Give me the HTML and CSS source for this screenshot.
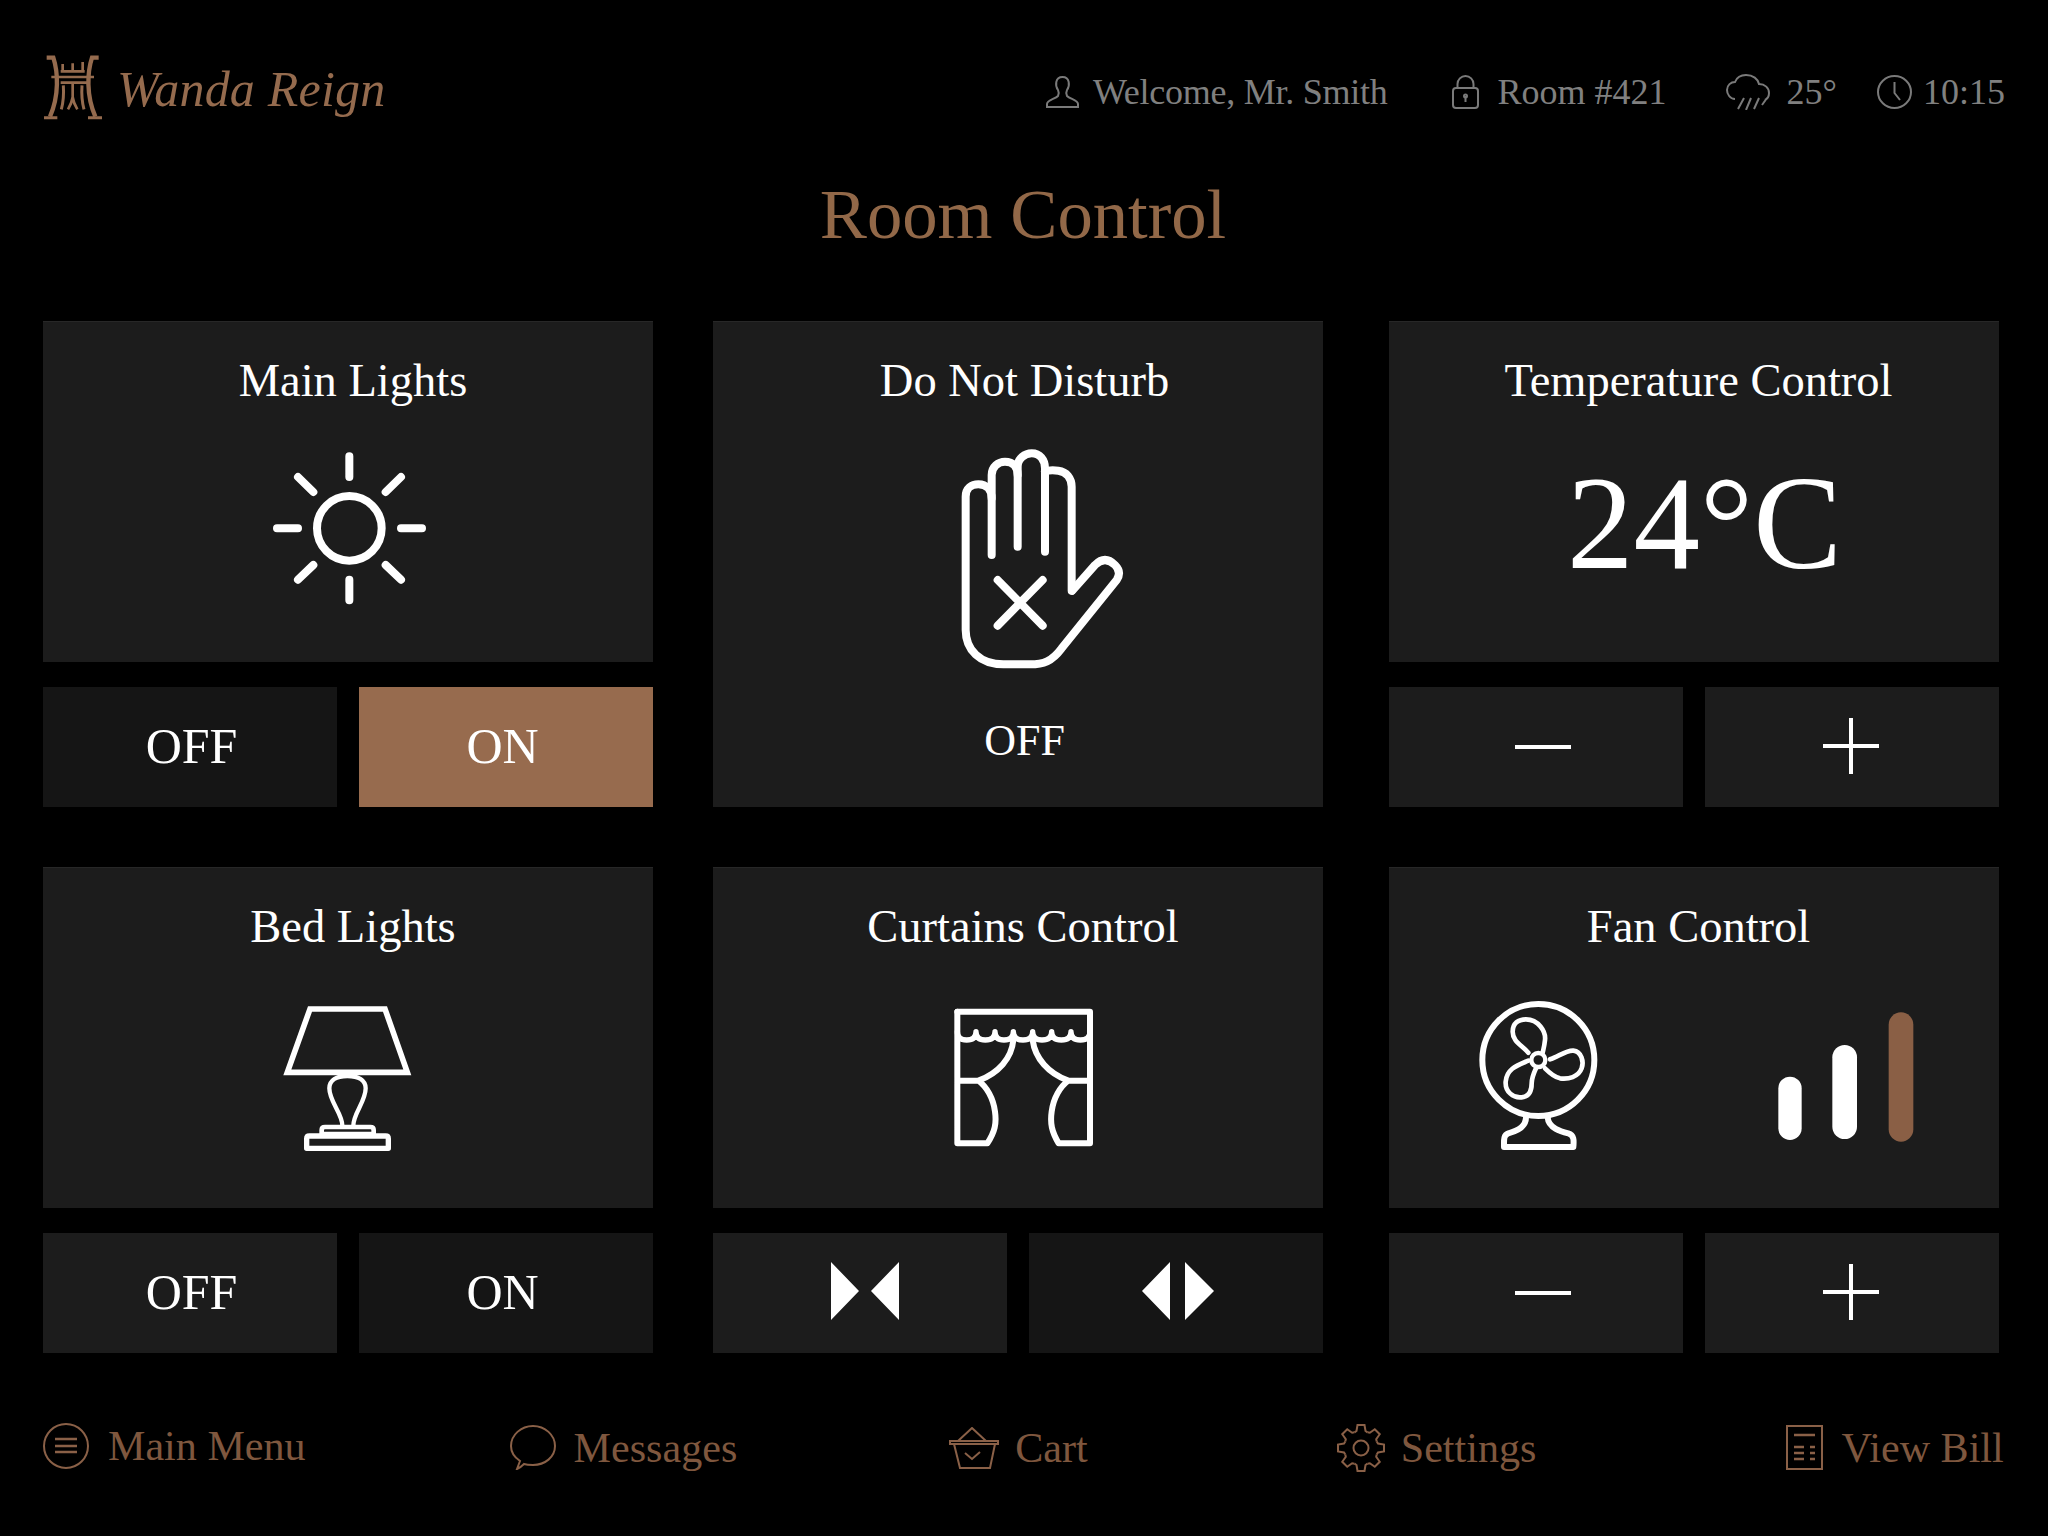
FILE: index.html
```html
<!DOCTYPE html>
<html lang="en">
<head>
<meta charset="utf-8">
<title>Room Control</title>
<link rel="stylesheet" href="styles.css">
</head>
<body>
<div class="page">
  <header class="header">
    <div class="brand">
      <svg class="logo" width="70" height="72" viewBox="0 0 210 216">
        <g class="logo-lines">
          <path stroke-width="13" d="M20 17H40C54 60 58 130 30 194"/>
          <path stroke-width="13" d="M176 17H156C142 60 138 130 166 194"/>
          <path stroke-width="9" d="M12 197H52M144 197H186"/>
          <path stroke-width="8" d="M62 58H134M34 75H162M62 92H150"/>
          <path stroke-width="8" d="M68 36V58M98 34V58M128 30V58"/>
          <path stroke-width="9" d="M70 100C72 130 70 150 64 172M126 100C124 130 126 150 132 172"/>
          <path stroke-width="8" d="M98 96V135C96 150 90 162 84 172M98 135C100 150 106 162 112 172"/>
        </g>
      </svg>
      <span class="brand-name">Wanda Reign</span>
    </div>
    <div class="status">
      <div class="status-item status-welcome">
        <svg class="status-icon" width="33" height="32" viewBox="0 0 33 32"><path d="M1 31H32V28C32 24 24 23 21 20C20 18 20 16 21 14C24 10 24 1 16.5 1C9 1 9 10 12 14C13 16 13 18 12 20C9 23 1 24 1 28Z"/></svg>
        <span>Welcome, Mr. Smith</span>
      </div>
      <div class="status-item status-room">
        <svg class="status-icon" width="27" height="34" viewBox="0 0 27 34"><rect x="1" y="13" width="25" height="20" rx="3"/><path d="M5.5 13V9A8 8 0 0 1 21.5 9V13M13.5 21V27"/><circle cx="13.5" cy="21" r="1.5"/></svg>
        <span>Room #421</span>
      </div>
      <div class="status-item status-weather">
        <svg class="status-icon" width="44" height="36" viewBox="0 0 44 36"><path d="M9 25C4 25 1 20 1 16C1 11 5 8 9 8C11 3 15 1 20 1C27 1 32 5 33 10C39 10 43 14 43 19C43 22 41 25 39 26M18 24L12 35M25 24L20 36M33 24L28 35M41 24L36 31"/></svg>
        <span>25°</span>
      </div>
      <div class="status-item status-clock">
        <svg class="status-icon" width="35" height="34" viewBox="0 0 35 34"><ellipse cx="17.5" cy="17" rx="16.5" ry="16"/><path d="M17.5 7V18L23 25"/></svg>
        <span>10:15</span>
      </div>
    </div>
  </header>

  <h1 class="page-title">Room Control</h1>

  <main class="panels">
    <div class="column">
      <section class="group">
        <div class="card">
          <h2 class="card-title">Main Lights</h2>
          <svg class="icon icon-sun" width="220" height="190" viewBox="0 0 660 570">
            <g class="line-white" stroke-width="24">
              <circle cx="328" cy="295" r="97"/>
              <path d="M328 79V141M328 449V511M111 295H174M483 295H546M174 141L220 186M483 141L437 186M174 449L220 405M483 449L437 405"/>
            </g>
          </svg>
        </div>
        <div class="btn-row">
          <button class="btn btn-dark"><span class="nudge-right">OFF</span></button>
          <button class="btn btn-on"><span class="nudge-left">ON</span></button>
        </div>
      </section>
      <section class="group">
        <div class="card">
          <h2 class="card-title">Bed Lights</h2>
          <svg class="icon icon-lamp" width="180" height="180" viewBox="0 0 540 540">
            <g class="line-white">
              <path stroke-width="17" stroke-linejoin="miter" d="M150 87H375L442 277H82Z"/>
              <path stroke-width="13" d="M247 437C247 400 208 365 208 325C208 300 230 288 262 288C295 288 317 300 317 325C317 365 280 400 280 437"/>
              <path stroke-width="14" d="M185 462V450Q185 441 195 441H331Q341 441 341 450V462Z"/>
              <path stroke-width="16" d="M140 505V476Q140 468 148 468H377Q385 468 385 476V505Z"/>
            </g>
          </svg>
        </div>
        <div class="btn-row">
          <button class="btn"><span class="nudge-right">OFF</span></button>
          <button class="btn btn-dark"><span class="nudge-left">ON</span></button>
        </div>
      </section>
    </div>

    <div class="column">
      <section class="group">
        <div class="card card-tall">
          <h2 class="card-title card-title-dnd">Do Not Disturb</h2>
          <svg class="icon icon-hand" width="220" height="250" viewBox="0 0 660 750">
            <g class="line-white" stroke-width="24">
              <path d="M457 482L525 405C545 385 565 385 585 405C600 420 600 435 590 450L425 655C395 695 370 703 330 703H250C180 703 137 660 137 600V200C137 175 155 163 175 163C200 163 215 180 215 205V375"/>
              <path d="M215 205V135C215 110 235 95 255 95C280 95 293 110 293 135V350"/>
              <path d="M293 135V110C293 85 315 70 335 70C360 70 375 90 375 115V365"/>
              <path d="M375 125C385 120 400 120 415 122C440 125 455 145 455 170V482"/>
              <path d="M233 450L368 587M368 450L233 587"/>
            </g>
          </svg>
          <p class="card-state">OFF</p>
        </div>
      </section>
      <section class="group">
        <div class="card">
          <h2 class="card-title">Curtains Control</h2>
          <svg class="icon icon-curtain" width="180" height="170" viewBox="0 0 540 510">
            <g class="line-white" stroke-width="18">
              <path d="M82 65H480V460H386C365 425 360 400 365 365C370 325 390 290 415 272H480M415 272C355 250 315 205 308 150"/>
              <path d="M82 65V460H172C195 425 200 400 195 365C190 325 170 290 145 272H82M145 272C205 250 245 205 250 150"/>
              <path stroke-width="16" d="M82 125Q82 150 110 150Q138 150 138 125Q138 150 166 150Q195 150 195 125Q195 150 222 150Q250 150 250 125Q250 150 279 150Q308 150 308 125Q308 150 336 150Q365 150 365 125Q365 150 394 150Q423 150 423 125Q423 150 451 150Q480 150 480 125"/>
            </g>
          </svg>
        </div>
        <div class="btn-row">
          <button class="btn">
            <svg class="arrows arrows-in" width="70" height="58" viewBox="0 0 70 58"><path d="M1 0L29 29L1 58ZM69 0L41 29L69 58Z"/></svg>
          </button>
          <button class="btn btn-dark">
            <svg class="arrows arrows-out" width="74" height="58" viewBox="0 0 74 58"><path d="M29 0L1 29L29 58ZM44 0L73 29L44 58Z"/></svg>
          </button>
        </div>
      </section>
    </div>

    <div class="column column-last">
      <section class="group">
        <div class="card">
          <h2 class="card-title card-title-right">Temperature Control</h2>
          <p class="temp">24°C</p>
        </div>
        <div class="btn-row">
          <button class="btn"><svg class="sign sign-minus" width="58" height="58" viewBox="0 0 58 58"><path d="M1 29H57"/></svg></button>
          <button class="btn"><svg class="sign sign-plus" width="58" height="58" viewBox="0 0 58 58"><path d="M1 29H57M29 1V57"/></svg></button>
        </div>
      </section>
      <section class="group">
        <div class="card">
          <h2 class="card-title card-title-right">Fan Control</h2>
          <svg class="icon icon-fan" width="480" height="170" viewBox="0 0 1440 510">
            <g class="line-white">
              <circle stroke-width="18" cx="235" cy="210" r="168"/>
              <circle stroke-width="13" cx="235" cy="210" r="21"/>
              <g stroke-width="14">
                <path d="M205 188C185 165 158 155 158 125C158 100 175 88 198 88C235 88 258 125 255 150C253 170 250 178 248 188"/>
                <path d="M270 208C295 200 320 180 340 182C365 185 372 215 365 235C355 262 325 268 300 265C285 262 270 250 255 235"/>
                <path d="M205 212C175 225 140 235 137 275C135 305 160 325 185 322C210 320 215 300 215 280C215 265 222 248 228 235"/>
              </g>
              <path stroke-width="18" d="M198 382C198 415 165 425 145 430C130 435 132 450 132 471H340C342 450 342 435 325 430C305 425 265 415 263 382"/>
            </g>
            <rect class="bar-white" x="955" y="260" width="70" height="190" rx="35"/>
            <rect class="bar-white" x="1117" y="165" width="74" height="282" rx="37"/>
            <rect class="bar-accent" x="1286" y="67" width="74" height="388" rx="37"/>
          </svg>
        </div>
        <div class="btn-row">
          <button class="btn"><svg class="sign sign-minus" width="58" height="58" viewBox="0 0 58 58"><path d="M1 29H57"/></svg></button>
          <button class="btn"><svg class="sign sign-plus" width="58" height="58" viewBox="0 0 58 58"><path d="M1 29H57M29 1V57"/></svg></button>
        </div>
      </section>
    </div>
  </main>

  <footer class="footer">
    <a class="nav-item nav-menu">
      <svg class="nav-icon" width="46" height="46" viewBox="0 0 46 46"><circle cx="23" cy="23" r="22"/><path stroke-width="2.5" d="M12 16H34M12 23H34M12 29H34"/></svg>
      <span>Main Menu</span>
    </a>
    <a class="nav-item nav-messages">
      <svg class="nav-icon" width="46" height="45" viewBox="0 0 46 45"><path d="M7 44L10 36C4 32 1 27 1 21C1 10 11 1 23 1C35 1 45 10 45 21C45 32 35 40 23 40C20 40 17 40 14 39C12 41 10 43 7 44Z"/></svg>
      <span>Messages</span>
    </a>
    <a class="nav-item nav-cart">
      <svg class="nav-icon" width="50" height="42" viewBox="0 0 50 42"><path d="M9 14L23 1L37 14M1 14H49V17H1ZM5 17L11 41H41L46 17M16 26L23 32L31 25"/></svg>
      <span>Cart</span>
    </a>
    <a class="nav-item nav-settings">
      <svg class="nav-icon" width="48" height="48" viewBox="-24 -24 48 48">
        <defs><path id="tooth" d="M-6.5 -15.7L-4.5 -17L-3.5 -23H3.5L4.5 -17L6.5 -15.7"/></defs>
        <circle r="7.5"/>
        <use href="#tooth"/>
        <use href="#tooth" transform="rotate(45)"/>
        <use href="#tooth" transform="rotate(90)"/>
        <use href="#tooth" transform="rotate(135)"/>
        <use href="#tooth" transform="rotate(180)"/>
        <use href="#tooth" transform="rotate(225)"/>
        <use href="#tooth" transform="rotate(270)"/>
        <use href="#tooth" transform="rotate(315)"/>
      </svg>
      <span>Settings</span>
    </a>
    <a class="nav-item nav-bill">
      <svg class="nav-icon" width="37" height="45" viewBox="0 0 37 45"><rect x="1" y="1" width="35" height="43"/><path stroke-width="2.5" d="M8 10H29M8 22H18M24 22H29M8 28H18M24 28H29M8 34H18M24 34H29"/></svg>
      <span>View Bill</span>
    </a>
  </footer>
</div>
</body>
</html>
```

FILE: styles.css
```css
* { box-sizing: border-box; }

html, body {
  margin: 0;
  padding: 0;
  background: #000;
}

.page {
  width: 2048px;
  height: 1536px;
  overflow: hidden;
  background: #000;
  color: #fff;
  font-family: "Liberation Serif", "Times New Roman", serif;
}

.header {
  display: flex;
  justify-content: space-between;
  align-items: center;
  height: 72px;
  margin-top: 52px;
  padding: 0 43px 0 40px;
}

.brand {
  display: flex;
  align-items: center;
}

.logo-lines {
  fill: none;
  stroke: #956b4e;
}

.brand-name {
  margin: 2px 0 0 7px;
  font-size: 50px;
  font-style: italic;
  letter-spacing: 0.2px;
  color: #956b4e;
}

.status {
  display: flex;
  align-items: center;
  margin-top: 8px;
  color: #808080;
  font-size: 36px;
}

.status-item {
  display: flex;
  align-items: center;
  gap: 15px;
}

.status-icon {
  fill: none;
  stroke: #7a7a7a;
  stroke-width: 2;
}

.status-welcome { gap: 14px; }
.status-welcome span { letter-spacing: -0.25px; }
.status-room { margin-left: 64px; gap: 19px; }
.status-weather { margin-left: 59px; gap: 17px; }
.status-clock { margin-left: 40px; gap: 11px; }

.page-title {
  margin: 50px 2px 0 0;
  height: 80px;
  font-size: 70.7px;
  font-weight: 400;
  line-height: 80px;
  text-align: center;
  color: #926848;
}

.panels {
  display: flex;
  margin-top: 67px;
  padding-left: 43px;
}

.column {
  display: flex;
  flex-direction: column;
  gap: 60px;
  width: 610px;
  margin-right: 60px;
}

.column-last { margin-left: 6px; margin-right: 0; }

.group {
  display: flex;
  flex-direction: column;
  gap: 25px;
}

.card {
  display: flex;
  flex-direction: column;
  align-items: flex-start;
  height: 341px;
  padding-top: 33px;
  background: #1c1c1c;
  box-shadow: inset 0 1px 0 #272727;
}

.card-tall { height: 486px; }

.card-title {
  width: 100%;
  margin: 0;
  padding-left: 10px;
  font-size: 46.5px;
  font-weight: 400;
  line-height: 53px;
  text-align: center;
}

.card-title-dnd { padding-left: 13px; }
.card-title-right { padding-left: 9px; }

.icon { flex-shrink: 0; display: block; }

.line-white {
  fill: none;
  stroke: #fff;
  stroke-linecap: round;
  stroke-linejoin: round;
}

.icon-sun { margin: 23px 0 0 197px; }
.icon-hand { margin: 23px 0 0 207px; }
.icon-lamp { margin: 27px 0 0 217px; }
.icon-curtain { margin: 37px 0 0 217px; }
.icon-fan { margin: 37px 0 0 71px; }

.bar-white { fill: #fff; }
.bar-accent { fill: #8a5f45; }

.card-state {
  width: 100%;
  margin: 36px 0 0;
  padding-left: 13px;
  font-size: 44px;
  line-height: 50px;
  text-align: center;
}

.temp {
  width: 100%;
  margin: 51px 0 0;
  padding-left: 21px;
  font-size: 133px;
  line-height: 130px;
  text-align: center;
}

.btn-row {
  display: flex;
  gap: 22px;
}

.btn {
  display: flex;
  flex: 1;
  align-items: center;
  justify-content: center;
  height: 120px;
  padding: 0 0 3px;
  border: 0;
  border-radius: 0;
  background: #1c1c1c;
  color: #fff;
  font-family: inherit;
  font-size: 50px;
}

.btn-dark { background: #151515; }
.btn-on { background: #976b4e; }
.nudge-left { margin-right: 7px; }
.nudge-right { margin-left: 3px; }

.arrows { fill: #fff; margin-left: 9px; margin-top: -1px; }
.arrows-out { margin-left: 4px; }

.sign {
  fill: none;
  stroke: #fff;
  stroke-width: 4;
}

.sign-minus { margin-left: 14px; margin-top: 3px; }
.sign-plus { margin-left: -3px; margin-top: 1px; }

.footer {
  display: flex;
  align-items: center;
  margin-top: 70px;
  padding-left: 43px;
  color: #7f573e;
  font-size: 42.1px;
}

.nav-item {
  display: flex;
  align-items: center;
}

.nav-icon {
  flex-shrink: 0;
  fill: none;
  stroke: #8a6047;
  stroke-width: 2;
}

.nav-menu { gap: 19px; margin-top: -4px; }
.nav-messages { margin-left: 204px; gap: 18px; }
.nav-cart { margin-left: 212px; gap: 16px; }
.nav-settings { margin-left: 249px; gap: 16px; }
.nav-bill { margin-left: 250px; gap: 18px; }
```
